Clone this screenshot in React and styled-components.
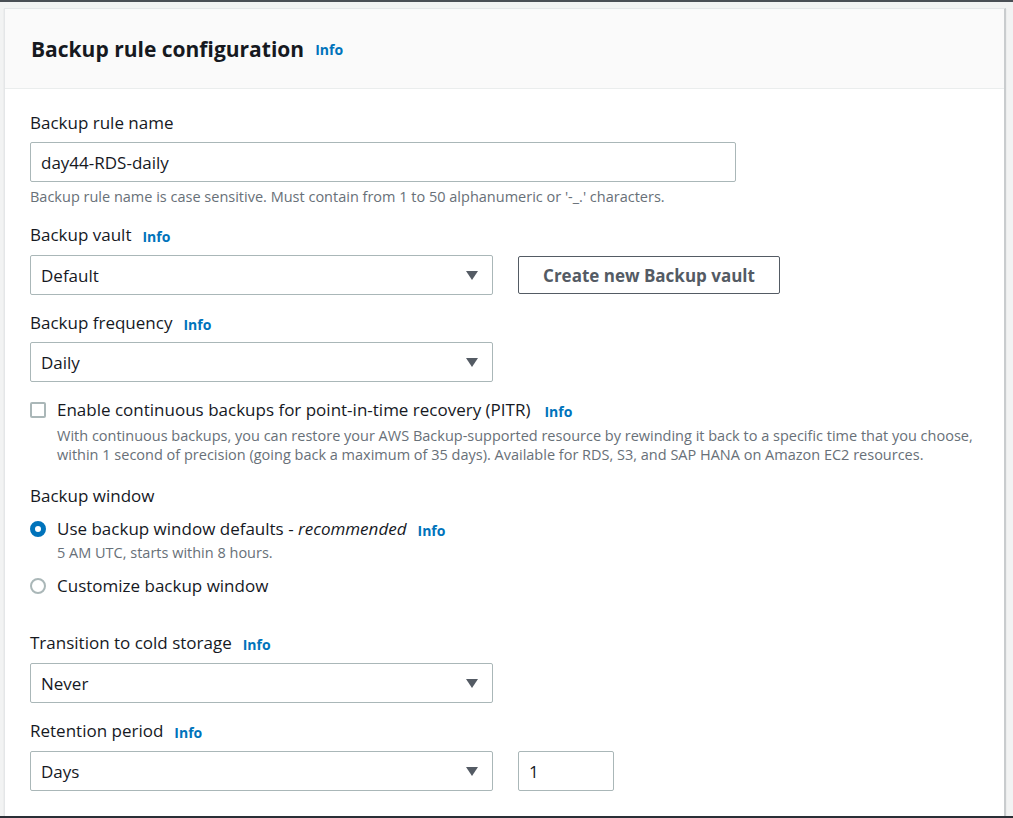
import React from 'react';
import styled, { createGlobalStyle } from 'styled-components';

const GlobalStyle = createGlobalStyle`
  html, body {
    margin: 0;
    padding: 0;
    background: #f2f3f3;
  }
  body {
    border-top: 2px solid #4a4f55;
    font-family: "Open Sans", "Noto Sans", Arial, sans-serif;
    color: #16191f;
    overflow: hidden;
  }
`;

const Page = styled.div`
  padding: 6px 7px 0 4px;
`;

const Card = styled.div`
  background: #fff;
  border: 1px solid #e4e6e8;
  border-right: 2px solid #c9ccce;
  box-shadow: 0 1px 1px rgba(0, 28, 36, 0.15);
`;

const Header = styled.div`
  background: #fafafa;
  border-bottom: 1px solid #eaeded;
  height: 79px;
  display: flex;
  align-items: center;
  padding: 0 26px;
`;

const Title = styled.h2`
  margin: 0;
  font-size: 21px;
  font-weight: 700;
  line-height: 28px;
  color: #16191f;
`;

const Info = styled.a`
  font-size: 14px;
  font-weight: 700;
  color: #0073bb;
  text-decoration: none;
  margin-left: ${(p) => p.$gap ?? 11}px;
  position: relative;
  top: 1px;
`;

const Body = styled.div`
  padding: 23px 25px 40px;
  display: flex;
  flex-direction: column;
`;

const Field = styled.div`
  display: flex;
  flex-direction: column;
  margin-bottom: ${(p) => p.$mb ?? 17}px;
`;

const Label = styled.div`
  font-size: 17px;
  line-height: 22px;
  margin-bottom: ${(p) => p.$mb ?? 8}px;
  color: #16191f;
`;

const Row = styled.div`
  display: flex;
  align-items: center;
  gap: 25px;
`;

const TextInput = styled.div`
  box-sizing: border-box;
  width: ${(p) => p.$w}px;
  height: 40px;
  border: 1px solid #aab7b8;
  border-radius: 2px;
  padding: 0 10px;
  display: flex;
  align-items: center;
  font-size: 17px;
  color: #16191f;
`;

const Select = styled(TextInput)`
  justify-content: space-between;
  padding-right: 14px;
`;

const Caret = styled.span`
  width: 0;
  height: 0;
  border-left: 6px solid transparent;
  border-right: 6px solid transparent;
  border-top: 9px solid #545b64;
`;

const Button = styled.button`
  box-sizing: border-box;
  width: 262px;
  height: 38px;
  background: #fff;
  border: 1px solid #545b64;
  border-radius: 2px;
  font-family: inherit;
  font-size: 17px;
  font-weight: 700;
  color: #545b64;
`;

const Hint = styled.div`
  font-size: 14.5px;
  line-height: 20px;
  color: #687078;
  margin-top: 5px;
`;

const Option = styled.div`
  display: grid;
  grid-template-columns: 16px 1fr;
  column-gap: 11px;
  margin-bottom: ${(p) => p.$mb ?? 0}px;
`;

const Box = styled.span`
  box-sizing: border-box;
  width: 16px;
  height: 16px;
  margin-top: 3px;
  border: 2px solid #aab7b8;
  border-radius: 2px;
`;

const Radio = styled.span`
  box-sizing: border-box;
  width: 16px;
  height: 16px;
  margin-top: 3px;
  border-radius: 50%;
  border: ${(p) => (p.$checked ? '5px solid #0073bb' : '2px solid #aab7b8')};
  background: #fff;
`;

const OptionText = styled.div`
  font-size: 17px;
  line-height: 22px;
  color: #16191f;

  em {
    font-style: italic;
  }
`;

const Desc = styled.div`
  font-size: 14.5px;
  line-height: 19px;
  color: #687078;
  margin-top: ${(p) => p.$mt ?? 4}px;
`;

const BottomBar = styled.div`
  position: fixed;
  left: 0;
  right: 0;
  bottom: 0;
  height: 2px;
  background: #2a2f36;
`;

export default function App() {
  return (
    <>
      <GlobalStyle />
      <Page>
        <Card>
          <Header>
            <Title>Backup rule configuration</Title>
            <Info href="#">Info</Info>
          </Header>
          <Body>
            <Field>
              <Label>Backup rule name</Label>
              <TextInput $w={706}>day44-RDS-daily</TextInput>
              <Hint>
                Backup rule name is case sensitive. Must contain from 1 to 50 alphanumeric or '-_.' characters.
              </Hint>
            </Field>

            <Field>
              <Label>
                Backup vault<Info href="#">Info</Info>
              </Label>
              <Row>
                <Select $w={463}>
                  Default
                  <Caret />
                </Select>
                <Button>Create new Backup vault</Button>
              </Row>
            </Field>

            <Field>
              <Label $mb={7}>
                Backup frequency<Info href="#">Info</Info>
              </Label>
              <Select $w={463}>
                Daily
                <Caret />
              </Select>
            </Field>

            <Field $mb={21}>
              <Option>
                <Box />
                <div>
                  <OptionText>
                    Enable continuous backups for point-in-time recovery (PITR)
                    <Info href="#" $gap={14}>Info</Info>
                  </OptionText>
                  <Desc>
                    With continuous backups, you can restore your AWS Backup-supported resource by rewinding it back to a specific time that you choose,
                    <br />
                    within 1 second of precision (going back a maximum of 35 days). Available for RDS, S3, and SAP HANA on Amazon EC2 resources.
                  </Desc>
                </div>
              </Option>
            </Field>

            <Field $mb={35}>
              <Label $mb={11}>Backup window</Label>
              <Option $mb={13}>
                <Radio $checked />
                <div>
                  <OptionText>
                    Use backup window defaults - <em>recommended</em>
                    <Info href="#">Info</Info>
                  </OptionText>
                  <Desc $mt={2}>5 AM UTC, starts within 8 hours.</Desc>
                </div>
              </Option>
              <Option>
                <Radio />
                <OptionText>Customize backup window</OptionText>
              </Option>
            </Field>

            <Field>
              <Label>
                Transition to cold storage<Info href="#">Info</Info>
              </Label>
              <Select $w={463}>
                Never
                <Caret />
              </Select>
            </Field>

            <Field>
              <Label>
                Retention period<Info href="#">Info</Info>
              </Label>
              <Row>
                <Select $w={463}>
                  Days
                  <Caret />
                </Select>
                <TextInput $w={96}>1</TextInput>
              </Row>
            </Field>
          </Body>
        </Card>
      </Page>
      <BottomBar />
    </>
  );
}
